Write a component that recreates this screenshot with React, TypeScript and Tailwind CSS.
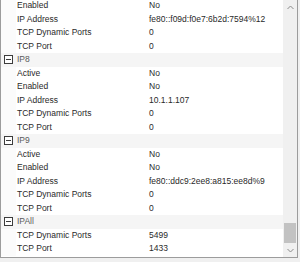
type Row = { name: string; value?: string; category?: boolean };

const rows: Row[] = [
  { name: 'Enabled', value: 'No' },
  { name: 'IP Address', value: 'fe80::f09d:f0e7:6b2d:7594%12' },
  { name: 'TCP Dynamic Ports', value: '0' },
  { name: 'TCP Port', value: '0' },
  { name: 'IP8', category: true },
  { name: 'Active', value: 'No' },
  { name: 'Enabled', value: 'No' },
  { name: 'IP Address', value: '10.1.1.107' },
  { name: 'TCP Dynamic Ports', value: '0' },
  { name: 'TCP Port', value: '0' },
  { name: 'IP9', category: true },
  { name: 'Active', value: 'No' },
  { name: 'Enabled', value: 'No' },
  { name: 'IP Address', value: 'fe80::ddc9:2ee8:a815:ee8d%9' },
  { name: 'TCP Dynamic Ports', value: '0' },
  { name: 'TCP Port', value: '0' },
  { name: 'IPAll', category: true },
  { name: 'TCP Dynamic Ports', value: '5499' },
  { name: 'TCP Port', value: '1433' },
];

function CollapseBox() {
  return (
    <svg width="9" height="9" viewBox="0 0 9 9" className="block">
      <rect x="0.5" y="0.5" width="8" height="8" fill="white" stroke="#3c3c3c" />
      <line x1="2" y1="4.5" x2="7" y2="4.5" stroke="#3c3c3c" />
    </svg>
  );
}

export default function App() {
  return (
    <div
      className="h-[262px] w-[300px] overflow-hidden bg-[#f0f0f0]"
      style={{ fontFamily: '"Liberation Sans", Arial, sans-serif' }}
    >
      <div className="flex h-[258px] w-[298px] border-x border-b border-[#9c9c9c] bg-white">
        <div className="flex-1 overflow-hidden">
          <div className="-mt-[1px]">
            {rows.map((r, i) =>
              r.category ? (
                <div key={i} className="flex h-[13.5px] items-center bg-[#f5f5f5]">
                  <div className="flex w-[15px] justify-center">
                    <CollapseBox />
                  </div>
                  <span className="pl-[1px] text-[8.5px] text-[#5a5a5a]">{r.name}</span>
                </div>
              ) : (
                <div key={i} className="flex h-[13.5px] items-center">
                  <div className="h-full w-[15px] bg-[#fbfbfb]" />
                  <span className="w-[133px] pl-[1px] text-[8.5px] text-[#2a2a2a]">{r.name}</span>
                  <span className="text-[8.5px] text-[#2a2a2a]">{r.value}</span>
                </div>
              )
            )}
          </div>
        </div>
        <div className="flex w-[14px] flex-col bg-[#f0f0f0]">
          <div className="flex h-[14px] items-center justify-center">
            <svg width="7" height="5" viewBox="0 0 7 5">
              <path d="M0.5 4 L3.5 1 L6.5 4" fill="none" stroke="#8a8a8a" strokeWidth="1" />
            </svg>
          </div>
          <div className="flex-1" />
          <div className="mx-[1px] h-[20px] bg-[#c2c2c2]" />
          <div className="flex h-[14px] items-center justify-center">
            <svg width="7" height="5" viewBox="0 0 7 5">
              <path d="M0.5 1 L3.5 4 L6.5 1" fill="none" stroke="#8a8a8a" strokeWidth="1" />
            </svg>
          </div>
        </div>
      </div>
    </div>
  );
}
